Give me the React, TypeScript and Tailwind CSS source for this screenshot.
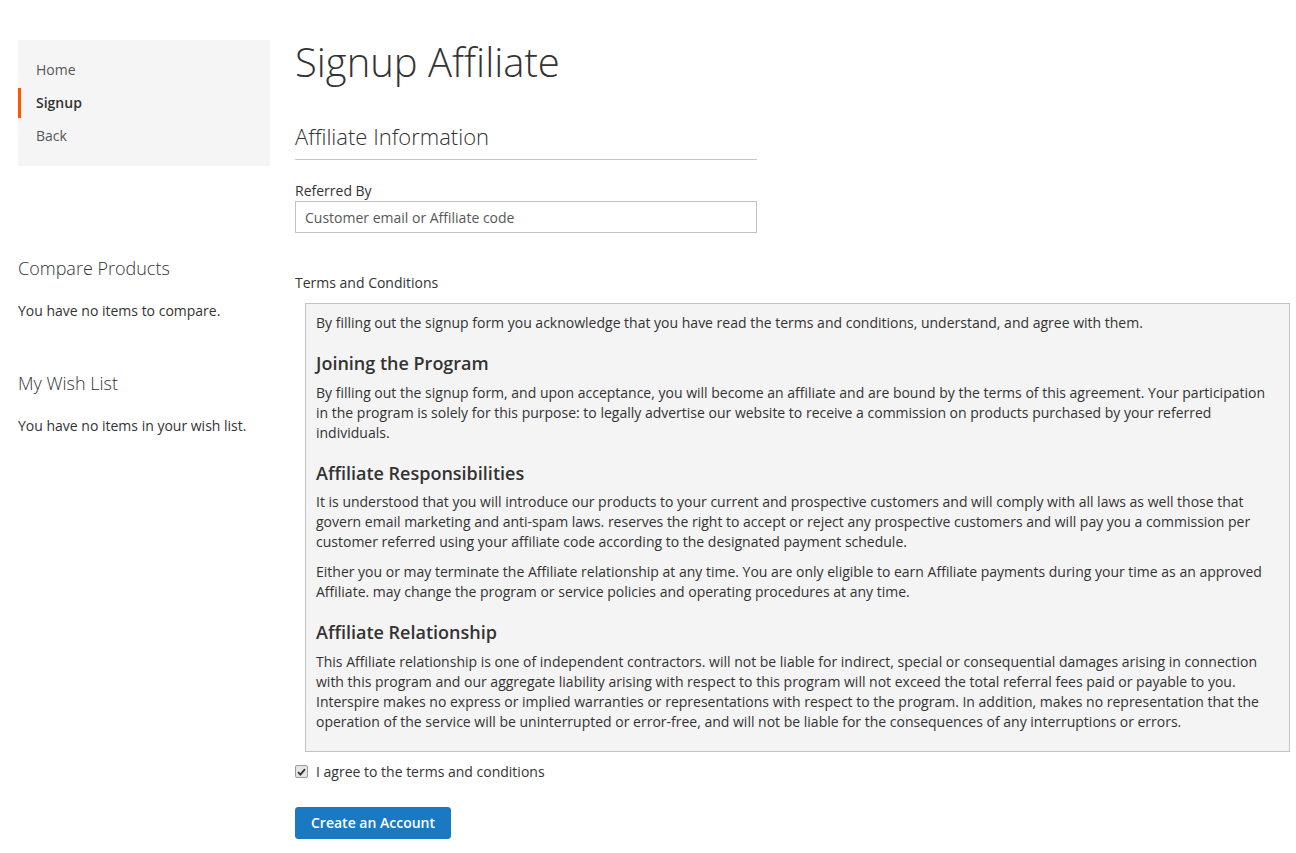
import { useState } from "react";

const navItems = [
  { label: "Home", active: false },
  { label: "Signup", active: true },
  { label: "Back", active: false },
];

export default function App() {
  const [agreed, setAgreed] = useState(true);

  return (
    <div
      className="flex min-h-screen bg-white pl-[18px] pr-[6px] pt-[40px] text-[14px] leading-[20px] text-[#333]"
      style={{ fontFamily: '"Open Sans", "Liberation Sans", sans-serif' }}
    >
      {/* Sidebar */}
      <aside className="w-[252px] shrink-0">
        <nav className="flex flex-col gap-[3px] bg-[#f5f5f5] py-[15px]">
          {navItems.map((item) => (
            <a
              key={item.label}
              href="#"
              className={
                item.active
                  ? "block h-[30px] border-l-[3px] border-[#ff5501] pl-[15px] leading-[30px] font-semibold text-[#333]"
                  : "block h-[30px] border-l-[3px] border-transparent pl-[15px] leading-[30px] text-[#575757]"
              }
            >
              {item.label}
            </a>
          ))}
        </nav>

        <div className="mt-[93px]">
          <h2 className="text-[18px] font-light leading-[1.1] text-[#333]">Compare Products</h2>
          <p className="mt-[22px]">You have no items to compare.</p>
        </div>

        <div className="mt-[53px]">
          <h2 className="text-[18px] font-light leading-[1.1] text-[#333]">My Wish List</h2>
          <p className="mt-[22px]">You have no items in your wish list.</p>
        </div>
      </aside>

      {/* Main */}
      <main className="ml-[25px] flex-1 pb-[14px]">
        <h1 className="text-[40px] font-light leading-[1.1]">Signup Affiliate</h1>

        <div className="w-[462px]">
          <h2 className="mt-[40px] border-b border-[#c6c6c6] pb-[11px] text-[22px] font-light leading-[1.1]">
            Affiliate Information
          </h2>
          <label className="mt-[21px] block">Referred By</label>
          <input
            type="text"
            placeholder="Customer email or Affiliate code"
            className="block h-[32px] w-full border border-[#c2c2c2] bg-white px-[9px] text-[14px] text-[#333] outline-none placeholder:text-[#575757]"
          />
        </div>

        <div className="mt-[40px]">Terms and Conditions</div>

        <div className="ml-[10px] mt-[10px] border border-[#c2c2c2] bg-[#f4f4f4] px-[10px] pt-[9px] pb-[9px]">
          <p className="mb-[10px]">
            By filling out the signup form you acknowledge that you have read the terms and conditions, understand, and agree with them.
          </p>
          <h3 className="mb-[9.5px] mt-[20px] text-[18px] font-semibold leading-[20px]">Joining the Program</h3>
          <p className="mb-[10px]">
            By filling out the signup form, and upon acceptance, you will become an affiliate and are bound by the terms of this agreement. Your participation in the program is solely for this purpose: to legally advertise our website to receive a commission on products purchased by your referred individuals.
          </p>
          <h3 className="mb-[9.5px] mt-[20px] text-[18px] font-semibold leading-[20px]">Affiliate Responsibilities</h3>
          <p className="mb-[10px]">
            It is understood that you will introduce our products to your current and prospective customers and will comply with all laws as well those that govern email marketing and anti-spam laws. reserves the right to accept or reject any prospective customers and will pay you a commission per customer referred using your affiliate code according to the designated payment schedule.
          </p>
          <p className="mb-[10px]">
            Either you or may terminate the Affiliate relationship at any time. You are only eligible to earn Affiliate payments during your time as an approved Affiliate. may change the program or service policies and operating procedures at any time.
          </p>
          <h3 className="mb-[9.5px] mt-[20px] text-[18px] font-semibold leading-[20px]">Affiliate Relationship</h3>
          <p className="mb-[10px]">
            This Affiliate relationship is one of independent contractors. will not be liable for indirect, special or consequential damages arising in connection with this program and our aggregate liability arising with respect to this program will not exceed the total referral fees paid or payable to you. Interspire makes no express or implied warranties or representations with respect to the program. In addition, makes no representation that the operation of the service will be uninterrupted or error-free, and will not be liable for the consequences of any interruptions or errors.
          </p>
        </div>

        <label className="mt-[10px] flex cursor-pointer items-center">
          <span
            onClick={() => setAgreed(!agreed)}
            className="flex h-[13px] w-[13px] items-center justify-center rounded-[2px] border border-[#9a9a9a] bg-[#e6e6e6]"
          >
            {agreed && (
              <svg width="9" height="8" viewBox="0 0 9 8">
                <path d="M1 4.2 L3.4 6.6 L8 1.2" fill="none" stroke="#333" strokeWidth="1.8" />
              </svg>
            )}
          </span>
          <span className="ml-[8px]">I agree to the terms and conditions</span>
        </label>

        <button className="mt-[25px] h-[32px] rounded-[3px] border border-[#1979c3] bg-[#1979c3] px-[15px] text-[14px] font-semibold text-white">
          Create an Account
        </button>
      </main>
    </div>
  );
}
